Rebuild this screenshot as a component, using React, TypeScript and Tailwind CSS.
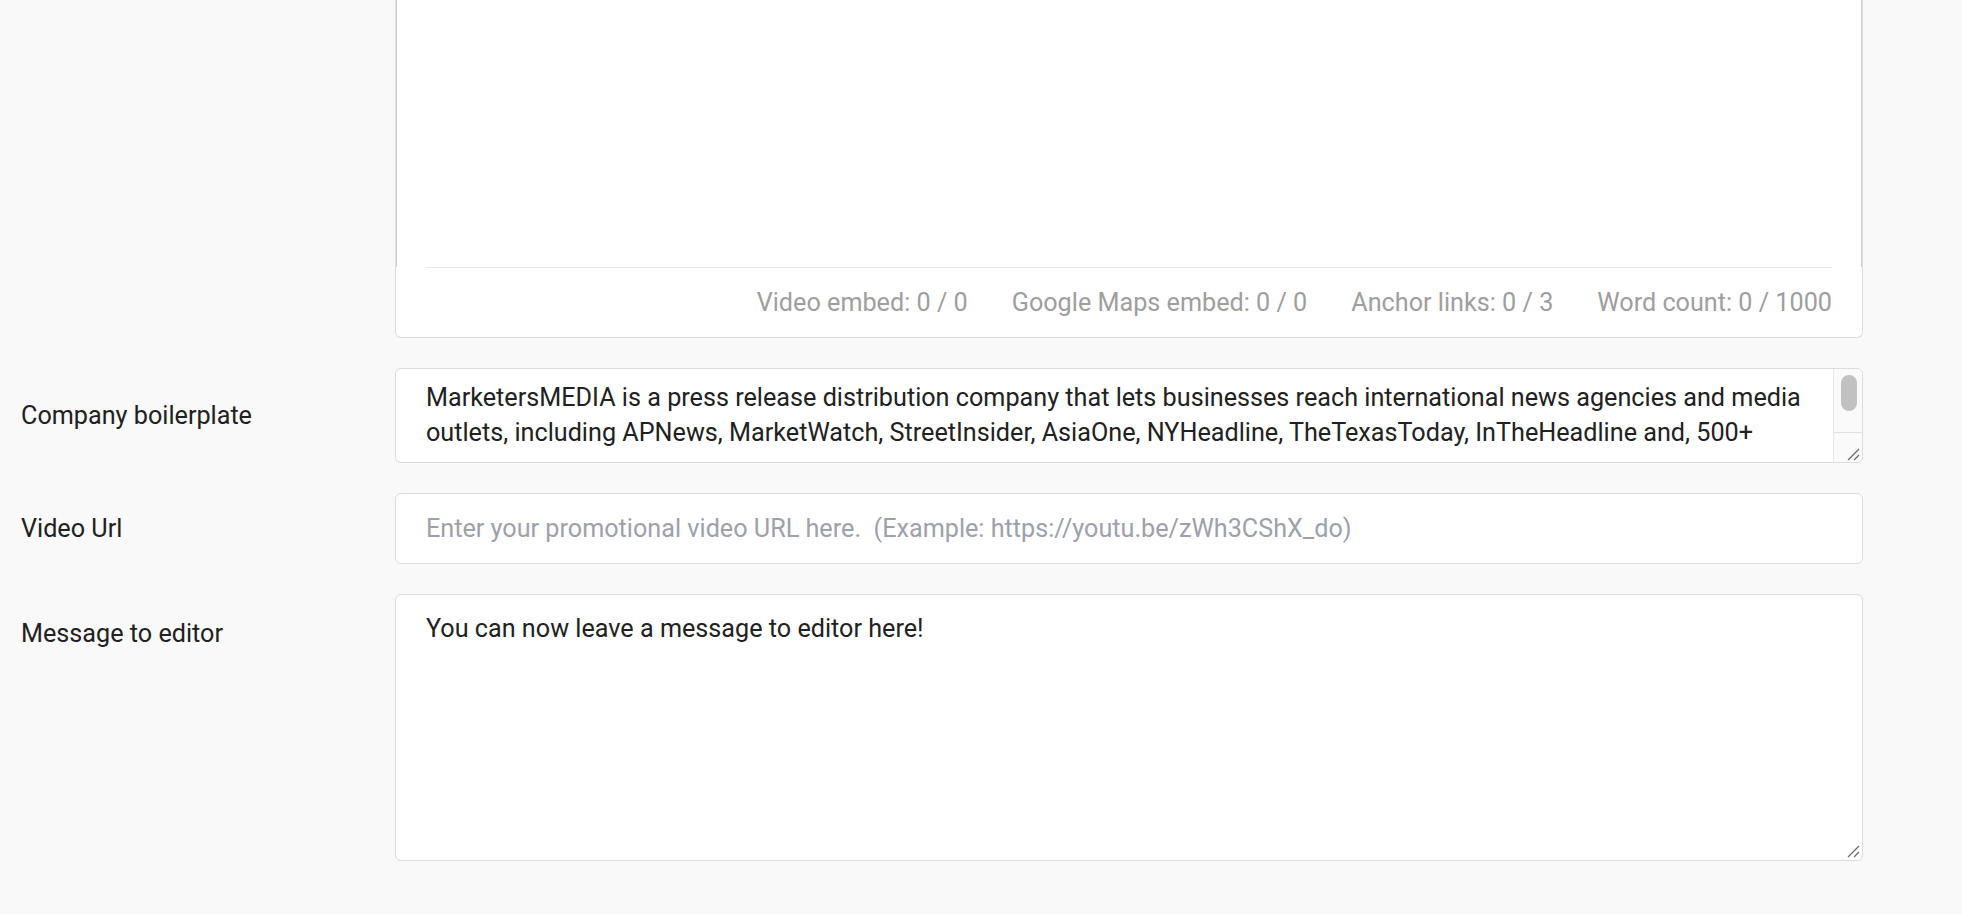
import React from "react";

function ResizeGrip() {
  return (
    <svg width="14" height="14" viewBox="0 0 14 14" className="text-[#6b6b6b]">
      <path d="M2 13 L13 2" stroke="currentColor" strokeWidth="1.3" />
      <path d="M8 13 L13 8" stroke="currentColor" strokeWidth="1.3" />
    </svg>
  );
}

function FormRow({
  label,
  labelClass,
  children,
}: {
  label?: string;
  labelClass?: string;
  children: React.ReactNode;
}) {
  return (
    <div className={"flex " + (labelClass ?? "")}>
      <div className="w-[374px] shrink-0">{label}</div>
      <div className="flex-1 min-w-0 flex">{children}</div>
    </div>
  );
}

export default function App() {
  return (
    <div className="min-h-screen bg-[#f9f9f9] font-[family-name:Roboto,sans-serif] text-[25.2px] leading-[35px] text-[#212121]">
      <div className="flex flex-col gap-[30px] pl-[21px] pr-[99px] pb-[54px]">
        <FormRow>
          <div className="flex-1 bg-white border border-t-0 border-[#dcdcdc] rounded-b-[6px]">
            <div className="h-[267px] border-x border-[#d0d0d0]" />
            <div className="px-[30px]">
              <div className="h-[70px] border-t border-[#e8e8e8] flex items-center justify-end gap-[44px] text-[#9e9e9e]">
                <span>Video embed: 0 / 0</span>
                <span>Google Maps embed: 0 / 0</span>
                <span>Anchor links: 0 / 3</span>
                <span>Word count: 0 / 1000</span>
              </div>
            </div>
          </div>
        </FormRow>

        <FormRow label="Company boilerplate" labelClass="items-center">
          <div className="flex-1 h-[95px] flex bg-white border border-[#dcdcdc] rounded-[6px] overflow-hidden">
            <div className="flex-1 min-w-0 h-[82px] overflow-hidden pl-[30px] pr-[30px] pt-[11px]">
              MarketersMEDIA is a press release distribution company that lets businesses reach
              international news agencies and media outlets, including APNews, MarketWatch,
              StreetInsider, AsiaOne, NYHeadline, TheTexasToday, InTheHeadline and, 500+ other
              news websites across the globe.
            </div>
            <div className="w-[29px] shrink-0 flex flex-col border-l border-[#e6e6e6] bg-[#fafafa]">
              <div className="flex-1 flex justify-center pt-[6px] pl-[2px]">
                <div className="w-[16px] h-[36px] rounded-full bg-[#c1c1c1]" />
              </div>
              <div className="h-[30px] border-t border-[#e0e0e0] flex items-end justify-end pr-[2px] pb-[1px]">
                <ResizeGrip />
              </div>
            </div>
          </div>
        </FormRow>

        <FormRow label="Video Url" labelClass="items-center">
          <input
            type="text"
            placeholder="Enter your promotional video URL here.  (Example: https://youtu.be/zWh3CShX_do)"
            className="flex-1 h-[71px] bg-white border border-[#dcdcdc] rounded-[6px] px-[30px] outline-none placeholder:text-[#9ca1ab]"
          />
        </FormRow>

        <FormRow label="Message to editor" labelClass="[&>div:first-child]:pt-[22px]">
          <div className="relative flex-1 flex">
            <textarea
              defaultValue="You can now leave a message to editor here!"
              className="flex-1 h-[267px] bg-white border border-[#dcdcdc] rounded-[6px] px-[30px] pt-[16px] outline-none resize-none leading-[35px]"
            />
            <div className="absolute right-[3px] bottom-[3px] pointer-events-none">
              <ResizeGrip />
            </div>
          </div>
        </FormRow>
      </div>
    </div>
  );
}
